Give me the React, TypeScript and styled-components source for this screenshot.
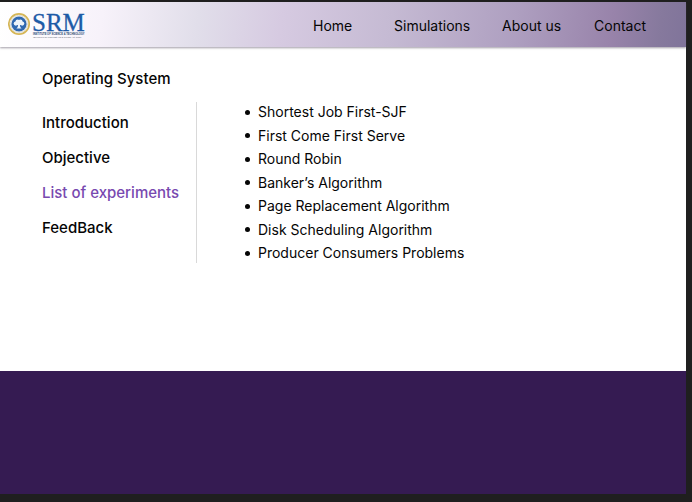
import React from "react";
import styled, { createGlobalStyle } from "styled-components";

const GlobalStyle = createGlobalStyle`
  * { box-sizing: border-box; }
  body {
    margin: 0;
    background: #1f1f1f;
    color: #050505;
    font-family: Inter, "Liberation Sans", sans-serif;
    font-size: 14px;
    line-height: 20px;
  }
`;

const Frame = styled.div`
  display: flex;
  flex-direction: column;
  min-height: 100vh;
  padding: 2px 6px 8px 0;
`;

const Header = styled.header`
  display: flex;
  align-items: center;
  justify-content: space-between;
  padding: 0 40px 0 8px;
  min-height: 45px;
  position: relative;
  background: linear-gradient(97deg, #ffffff 0%, #f7f2fa 15%, #e1deea 29%, #d6cae1 41%, #c5bad3 57%, #ae9fc0 75%, #9883aa 89%, #86799d 96%, #80749a 100%);
  box-shadow: 0 1px 2px 0 rgba(70, 60, 80, 0.5);
`;

const LogoLink = styled.a`
  display: block;
  line-height: 0;
`;

const Nav = styled.nav`
  display: grid;
  grid-template-columns: 81px 108px 92px auto;
  padding-top: 3px;
`;

const NavLink = styled.a`
  color: inherit;
  text-decoration: none;
  white-space: nowrap;
`;

const Main = styled.main`
  flex: 1;
  padding: 22px 24px 0 42px;
  background: #ffffff;
`;

const Title = styled.h1`
  margin: 0 0 13px;
  font-size: 15px;
  font-weight: 500;
  line-height: 20px;
`;

const Columns = styled.div`
  display: flex;
`;

const Sidebar = styled.nav`
  display: flex;
  flex-direction: column;
  gap: 15px;
  width: 155px;
  padding: 11px 0 25px;
  border-right: 1px solid #d9d9d9;
`;

const SideLink = styled.a<{ $active?: boolean }>`
  color: ${(p) => (p.$active ? "#7849b0" : "inherit")};
  font-size: 15px;
  font-weight: 500;
  text-decoration: none;
  white-space: nowrap;
`;

const Experiments = styled.ul`
  display: flex;
  flex-direction: column;
  justify-content: space-between;
  margin: 0 0 0 48px;
  padding: 0;
  list-style: none;
`;

const Experiment = styled.li`
  display: flex;
  align-items: center;
  gap: 8px;

  &::before {
    content: "";
    width: 5px;
    height: 5px;
    border-radius: 50%;
    background: #050505;
  }
`;

const Footer = styled.footer`
  height: 123px;
  background: #351b52;
`;

const Logo = () => (
  <svg width="80" height="38" viewBox="0 -4 80 38" role="img" aria-label="SRM Institute of Science and Technology">
    <circle cx="11" cy="14" r="10.2" fill="#f4f2ea" stroke="#d5b657" strokeWidth="1.7" />
    <circle cx="11" cy="14" r="8.4" fill="none" stroke="#c9cdd2" strokeWidth="1" strokeDasharray="1 0.7" />
    <circle cx="11" cy="14" r="7.6" fill="#2f68b0" />
    <g fill="#edf4fa">
      <circle cx="7.8" cy="13.6" r="2.1" />
      <circle cx="9.6" cy="11.6" r="2.1" />
      <circle cx="12.4" cy="11.6" r="2.1" />
      <circle cx="14.2" cy="13.6" r="2.1" />
      <path d="M8 12h6v3h-2c0 1.600.4 2.500 1.600 3.400H8.400c1.200-.9 1.600-1.800 1.600-3.400H8z" />
    </g>
    <text x="24" y="21" fontFamily="Liberation Serif, serif" fontSize="25" fill="#1e5ba7" stroke="#1e5ba7" strokeWidth="0.3">SRM</text>
    <text x="25" y="25" fontFamily="Liberation Sans, sans-serif" fontSize="2.6" fontWeight="700" fill="#26456f">INSTITUTE OF SCIENCE &amp; TECHNOLOGY</text>
    <text x="25" y="28" fontFamily="Liberation Sans, sans-serif" fontSize="2.2" fill="#4a5365">(Deemed to be University u/s 3 of UGC Act, 1956)</text>
  </svg>
);

const navItems = ["Home", "Simulations", "About us", "Contact"];
const sections = ["Introduction", "Objective", "List of experiments", "FeedBack"];
const experiments = [
  "Shortest Job First-SJF",
  "First Come First Serve",
  "Round Robin",
  "Banker’s Algorithm",
  "Page Replacement Algorithm",
  "Disk Scheduling Algorithm",
  "Producer Consumers Problems",
];

export default function App() {
  return (
    <>
      <GlobalStyle />
      <Frame>
        <Header>
          <LogoLink href="#"><Logo /></LogoLink>
          <Nav aria-label="Main">
            {navItems.map((item) => <NavLink key={item} href="#">{item}</NavLink>)}
          </Nav>
        </Header>
        <Main>
          <Title>Operating System</Title>
          <Columns>
            <Sidebar aria-label="Sections">
              {sections.map((item) => (
                <SideLink key={item} href="#" $active={item === "List of experiments"}>{item}</SideLink>
              ))}
            </Sidebar>
            <Experiments>
              {experiments.map((item) => <Experiment key={item}>{item}</Experiment>)}
            </Experiments>
          </Columns>
        </Main>
        <Footer />
      </Frame>
    </>
  );
}
